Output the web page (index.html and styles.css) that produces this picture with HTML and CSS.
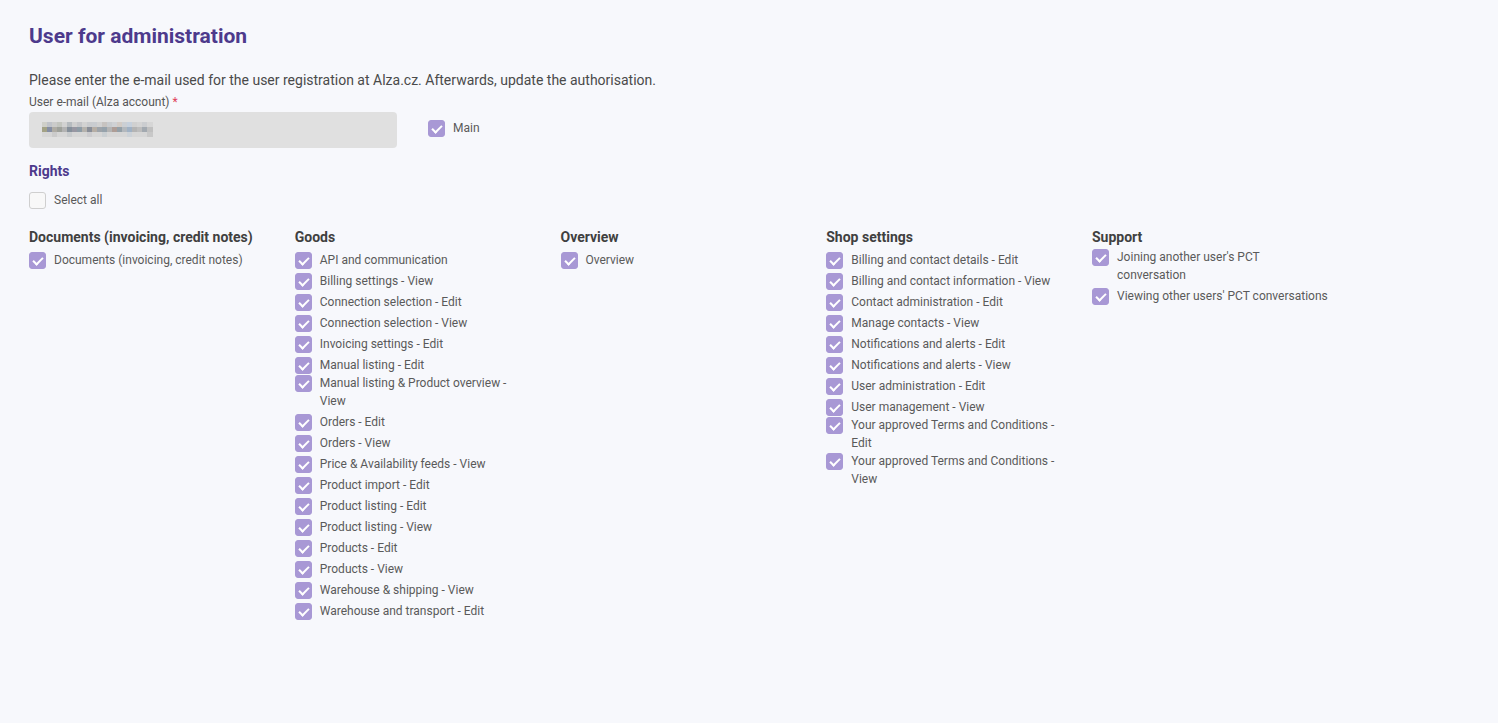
FILE: index.html
```html
<!DOCTYPE html>
<html lang="en">
<head>
<meta charset="utf-8">
<title>User for administration</title>
<link rel="stylesheet" href="styles.css">
</head>
<body>
<main class="page">
  <h1 class="title">User for administration</h1>
  <p class="intro">Please enter the e-mail used for the user registration at Alza.cz. Afterwards, update the authorisation.</p>
  <label class="field-label">User e-mail (Alza account) <span class="req">*</span></label>
  <div class="field-row">
    <div class="input">
      <svg class="mosaic" width="111" height="15" viewBox="0 0 111 15" aria-hidden="true">
        <g>
          <rect x="0" y="0" width="5" height="5" fill="#cfcfc9"/><rect x="5" y="0" width="5" height="5" fill="#c0c3c9"/><rect x="10" y="0" width="5" height="5" fill="#cbcbca"/><rect x="15" y="0" width="5" height="5" fill="#c3c5bf"/><rect x="20" y="0" width="5" height="5" fill="#d2d2d2"/><rect x="25" y="0" width="5" height="5" fill="#b6bbbf"/><rect x="30" y="0" width="5" height="5" fill="#cfcfcf"/><rect x="35" y="0" width="5" height="5" fill="#c4c5c8"/><rect x="40" y="0" width="5" height="5" fill="#d2d2d2"/><rect x="45" y="0" width="5" height="5" fill="#c9cbce"/><rect x="50" y="0" width="5" height="5" fill="#c9ccd0"/><rect x="55" y="0" width="5" height="5" fill="#d1d1d1"/><rect x="60" y="0" width="5" height="5" fill="#c7c3c0"/><rect x="65" y="0" width="5" height="5" fill="#c8cbce"/><rect x="70" y="0" width="5" height="5" fill="#cfd1d4"/><rect x="75" y="0" width="5" height="5" fill="#d2cbc5"/><rect x="80" y="0" width="5" height="5" fill="#cbcfd4"/><rect x="85" y="0" width="5" height="5" fill="#c6d0dc"/><rect x="90" y="0" width="5" height="5" fill="#d0d0d0"/><rect x="95" y="0" width="5" height="5" fill="#d4d4d4"/><rect x="100" y="0" width="5" height="5" fill="#cbcdd0"/><rect x="105" y="0" width="6" height="5" fill="#d6d6d6"/>
        </g>
        <g>
          <rect x="0" y="5" width="5" height="5" fill="#a3a286"/><rect x="5" y="5" width="5" height="5" fill="#858ea3"/><rect x="10" y="5" width="5" height="5" fill="#afaca4"/><rect x="15" y="5" width="5" height="5" fill="#9ea19b"/><rect x="20" y="5" width="5" height="5" fill="#b3b3b3"/><rect x="25" y="5" width="5" height="5" fill="#86909b"/><rect x="30" y="5" width="5" height="5" fill="#9897a2"/><rect x="35" y="5" width="5" height="5" fill="#8e9ca6"/><rect x="40" y="5" width="5" height="5" fill="#b5b2ad"/><rect x="45" y="5" width="5" height="5" fill="#898e98"/><rect x="50" y="5" width="5" height="5" fill="#b6aea5"/><rect x="55" y="5" width="5" height="5" fill="#9ea4aa"/><rect x="60" y="5" width="5" height="5" fill="#96a2ab"/><rect x="65" y="5" width="5" height="5" fill="#b4b4b4"/><rect x="70" y="5" width="5" height="5" fill="#ae9d96"/><rect x="75" y="5" width="5" height="5" fill="#94a0a8"/><rect x="80" y="5" width="5" height="5" fill="#b3b8bd"/><rect x="85" y="5" width="5" height="5" fill="#a0b1c4"/><rect x="90" y="5" width="5" height="5" fill="#b4b4b4"/><rect x="95" y="5" width="5" height="5" fill="#bdbdbd"/><rect x="100" y="5" width="5" height="5" fill="#a2a9b0"/><rect x="105" y="5" width="6" height="5" fill="#c0c0c0"/>
        </g>
        <g>
          <rect x="0" y="10" width="111" height="5" fill="#d6d6d6"/><rect x="10" y="10" width="5" height="5" fill="#cbcbcb"/><rect x="25" y="10" width="5" height="5" fill="#c9ccce"/><rect x="45" y="10" width="5" height="5" fill="#cccccf"/><rect x="60" y="10" width="5" height="5" fill="#cacfd2"/><rect x="85" y="10" width="5" height="5" fill="#ccd2d8"/><rect x="105" y="10" width="6" height="5" fill="#c8c8c8"/>
        </g>
      </svg>
    </div>
    <label class="check main-check"><span class="cb on"></span><span class="txt">Main</span></label>
  </div>

  <h2 class="section">Rights</h2>
  <label class="check select-all"><span class="cb"></span><span class="txt">Select all</span></label>

  <div class="groups">
    <section class="group">
      <h3 class="group-title">Documents (invoicing, credit notes)</h3>
      <ul class="items">
        <li class="check"><span class="cb on"></span><span class="txt">Documents (invoicing, credit notes)</span></li>
      </ul>
    </section>
    <section class="group">
      <h3 class="group-title">Goods</h3>
      <ul class="items">
        <li class="check"><span class="cb on"></span><span class="txt">API and communication</span></li>
        <li class="check"><span class="cb on"></span><span class="txt">Billing settings - View</span></li>
        <li class="check"><span class="cb on"></span><span class="txt">Connection selection - Edit</span></li>
        <li class="check"><span class="cb on"></span><span class="txt">Connection selection - View</span></li>
        <li class="check"><span class="cb on"></span><span class="txt">Invoicing settings - Edit</span></li>
        <li class="check"><span class="cb on"></span><span class="txt">Manual listing - Edit</span></li>
        <li class="check multi"><span class="cb on"></span><span class="txt">Manual listing &amp; Product overview - View</span></li>
        <li class="check"><span class="cb on"></span><span class="txt">Orders - Edit</span></li>
        <li class="check"><span class="cb on"></span><span class="txt">Orders - View</span></li>
        <li class="check"><span class="cb on"></span><span class="txt">Price &amp; Availability feeds - View</span></li>
        <li class="check"><span class="cb on"></span><span class="txt">Product import - Edit</span></li>
        <li class="check"><span class="cb on"></span><span class="txt">Product listing - Edit</span></li>
        <li class="check"><span class="cb on"></span><span class="txt">Product listing - View</span></li>
        <li class="check"><span class="cb on"></span><span class="txt">Products - Edit</span></li>
        <li class="check"><span class="cb on"></span><span class="txt">Products - View</span></li>
        <li class="check"><span class="cb on"></span><span class="txt">Warehouse &amp; shipping - View</span></li>
        <li class="check"><span class="cb on"></span><span class="txt">Warehouse and transport - Edit</span></li>
      </ul>
    </section>
    <section class="group">
      <h3 class="group-title">Overview</h3>
      <ul class="items">
        <li class="check"><span class="cb on"></span><span class="txt">Overview</span></li>
      </ul>
    </section>
    <section class="group">
      <h3 class="group-title">Shop settings</h3>
      <ul class="items">
        <li class="check"><span class="cb on"></span><span class="txt">Billing and contact details - Edit</span></li>
        <li class="check"><span class="cb on"></span><span class="txt">Billing and contact information - View</span></li>
        <li class="check"><span class="cb on"></span><span class="txt">Contact administration - Edit</span></li>
        <li class="check"><span class="cb on"></span><span class="txt">Manage contacts - View</span></li>
        <li class="check"><span class="cb on"></span><span class="txt">Notifications and alerts - Edit</span></li>
        <li class="check"><span class="cb on"></span><span class="txt">Notifications and alerts - View</span></li>
        <li class="check"><span class="cb on"></span><span class="txt">User administration - Edit</span></li>
        <li class="check"><span class="cb on"></span><span class="txt">User management - View</span></li>
        <li class="check multi"><span class="cb on"></span><span class="txt">Your approved Terms and Conditions - Edit</span></li>
        <li class="check multi"><span class="cb on"></span><span class="txt">Your approved Terms and Conditions - View</span></li>
      </ul>
    </section>
    <section class="group">
      <h3 class="group-title">Support</h3>
      <ul class="items">
        <li class="check multi"><span class="cb on"></span><span class="txt">Joining another user's PCT conversation</span></li>
        <li class="check"><span class="cb on"></span><span class="txt">Viewing other users' PCT conversations</span></li>
      </ul>
    </section>
  </div>
</main>
</body>
</html>
```

FILE: styles.css
```css
* { box-sizing: border-box; }

html, body {
  margin: 0;
  padding: 0;
  background: #f7f8fc;
}

body {
  font-family: Roboto, "Liberation Sans", Arial, sans-serif;
  color: #555;
  min-height: 723px;
}

.page {
  padding: 22px 29px 40px;
}

.title {
  margin: 0;
  font-size: 21px;
  line-height: 28px;
  font-weight: 700;
  color: #4d3a8c;
}

.intro {
  margin: 20px 0 0;
  font-size: 14px;
  line-height: 20px;
  color: #4a4a4a;
}

.field-label {
  display: block;
  margin-top: 4px;
  font-size: 12px;
  line-height: 16px;
  color: #555;
}

.req { color: #e0405a; }

.field-row {
  display: flex;
  align-items: flex-start;
  gap: 31px;
  margin-top: 2px;
}

.input {
  width: 368px;
  height: 36px;
  background: #e0e0e0;
  border-radius: 4px;
  display: flex;
  align-items: center;
  padding-left: 13px;
}

.mosaic { display: block; margin-top: -2px; }

.check {
  display: flex;
  align-items: flex-start;
  gap: 8px;
  font-size: 12px;
  line-height: 18px;
  color: #5a5a5a;
}

.cb {
  position: relative;
  flex: 0 0 17px;
  width: 17px;
  height: 17px;
  margin-top: 0.5px;
  border-radius: 3px;
  background: #f8f8f8;
  border: 1px solid #cfcfcf;
}

.cb.on {
  background: #a898d5;
  border-color: #a898d5;
}

.cb.on::after {
  content: "";
  position: absolute;
  left: 5px;
  top: 2px;
  width: 4px;
  height: 8px;
  border: solid #fff;
  border-width: 0 2px 2px 0;
  transform: rotate(45deg);
}

.main-check { margin-top: 7px; }

.section {
  margin: 14px 0 0;
  font-size: 14px;
  line-height: 18px;
  font-weight: 700;
  color: #4d3a8c;
}

.select-all { margin-top: 11px; }

.groups {
  display: grid;
  grid-template-columns: repeat(5, 237px);
  column-gap: 28.75px;
  margin-top: 19px;
  align-items: start;
}

.group-title {
  margin: 0;
  font-size: 14px;
  line-height: 18px;
  font-weight: 700;
  color: #404040;
}

.items {
  list-style: none;
  margin: 5px 0 0;
  padding: 0;
  display: flex;
  flex-direction: column;
  gap: 3px;
}

.items .multi { margin-top: -3px; }
```
